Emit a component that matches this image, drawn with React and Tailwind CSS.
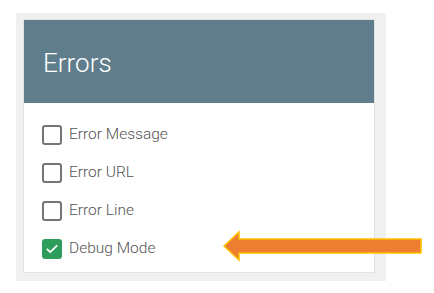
import React from "react";

const items = [
  { label: "Error Message", checked: false },
  { label: "Error URL", checked: false },
  { label: "Error Line", checked: false },
  { label: "Debug Mode", checked: true },
];

const Checkbox = ({ checked }) =>
  checked ? (
    <span className="w-[20px] h-[20px] rounded-[3px] bg-[#2e9d5c] flex items-center justify-center">
      <svg width="14" height="14" viewBox="0 0 24 24" fill="none">
        <path d="M4 12.5l5 5L20 6.5" stroke="white" strokeWidth="3" strokeLinecap="round" strokeLinejoin="round" />
      </svg>
    </span>
  ) : (
    <span className="w-[20px] h-[20px] rounded-[3px] border-2 border-[#757575] bg-white" />
  );

export default function App() {
  return (
    <div className="relative w-[434px] h-[293px] bg-white pt-[13px] pl-[16px] font-['Roboto',sans-serif]">
      <div className="w-[370px] h-[268px] bg-[#f0f0f0] pt-[6px] pl-[7px]">
        <div className="w-[352px] h-[254px] bg-white border border-[#e2e2e2]">
          {/* header */}
          <div className="h-[83px] bg-[#607d8b] flex items-center pl-[19px] pt-[3px]">
            <h2 className="text-[26px] font-light text-white leading-none">Errors</h2>
          </div>
          {/* options */}
          <ul className="pt-[13px] pl-[18px]">
            {items.map((it) => (
              <li key={it.label} className="h-[38px] flex items-center gap-[7px]">
                <Checkbox checked={it.checked} />
                <span className="text-[15.5px] font-light text-[#555555]">{it.label}</span>
              </li>
            ))}
          </ul>
        </div>
      </div>

      {/* callout arrow */}
      <svg className="absolute left-[222px] top-[230px]" width="202" height="32" viewBox="0 0 202 32">
        <path
          d="M2 16 L17 2 L17 9 L199 9 L199 23 L17 23 L17 30 Z"
          fill="#ed7d31"
          stroke="#ffc000"
          strokeWidth="1.5"
          strokeLinejoin="miter"
        />
      </svg>
    </div>
  );
}
